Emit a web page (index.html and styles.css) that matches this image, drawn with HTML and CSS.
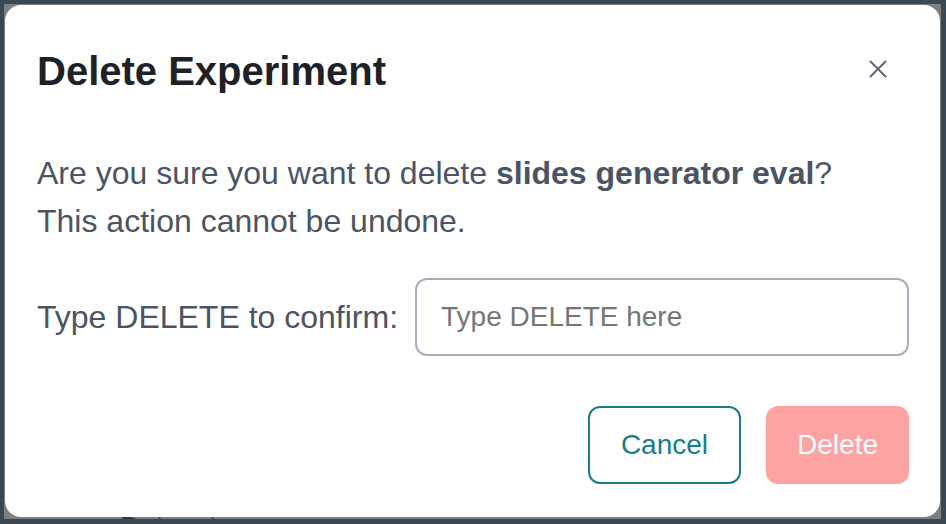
FILE: index.html
```html
<!DOCTYPE html>
<html lang="en">
<head>
<meta charset="utf-8">
<title>Delete Experiment</title>
<link rel="stylesheet" href="styles.css">
</head>
<body>
<div class="screen">
  <div class="behind">Dataset</div>
  <div class="modal" role="dialog" aria-labelledby="dlg-title">
    <div class="modal-header">
      <h2 class="modal-title" id="dlg-title">Delete Experiment</h2>
      <button class="close-btn" aria-label="Close">
        <svg width="18" height="18" viewBox="0 0 18 18" aria-hidden="true">
          <path d="M1.5 1.5 L16.5 16.5 M16.5 1.5 L1.5 16.5" stroke="#5f6872" stroke-width="2" stroke-linecap="round" fill="none"/>
        </svg>
      </button>
    </div>
    <p class="modal-text">Are you sure you want to delete <strong>slides generator eval</strong>?<br>This action cannot be undone.</p>
    <div class="confirm-row">
      <label class="confirm-label" for="confirm">Type DELETE to confirm:</label>
      <input class="confirm-input" id="confirm" type="text" placeholder="Type DELETE here">
    </div>
    <div class="actions">
      <button class="btn btn-cancel">Cancel</button>
      <button class="btn btn-delete" disabled>Delete</button>
    </div>
  </div>
</div>
</body>
</html>
```

FILE: styles.css
```css
* { box-sizing: border-box; }

html, body {
  margin: 0;
  height: 100%;
}

body {
  background: #394852;
  padding: 4px 5px 5px 4px;
  font-family: "Liberation Sans", Arial, sans-serif;
  overflow: hidden;
}

.screen {
  position: relative;
  height: 515px;
  background: #7f7f7f;
  overflow: hidden;
  padding: 1px 1px 0 1px;
}

.behind {
  position: absolute;
  left: 116px;
  top: 507px;
  font-size: 28px;
  line-height: 32px;
  color: #35393e;
}

.modal {
  position: relative;
  background: #ffffff;
  border-radius: 16px;
  padding: 38px 31px 33px 32px;
}

.modal-header {
  display: flex;
  align-items: center;
  justify-content: space-between;
  height: 56px;
}

.modal-title {
  margin: 0;
  font-size: 40px;
  line-height: 56px;
  font-weight: 700;
  color: #1e2226;
}

.close-btn {
  width: 40px;
  height: 40px;
  margin: 0 11px 4px 0;
  padding: 0;
  border: 0;
  background: transparent;
  display: flex;
  align-items: center;
  justify-content: center;
  cursor: pointer;
}

.modal-text {
  margin: 50px 0 0 0;
  font-size: 32px;
  line-height: 48px;
  color: #4a5462;
}

.modal-text strong {
  font-weight: 700;
  color: #4a5462;
}

.confirm-row {
  display: flex;
  align-items: center;
  gap: 17px;
  margin-top: 33px;
}

.confirm-label {
  font-size: 32px;
  line-height: 48px;
  color: #4a5462;
  white-space: nowrap;
}

.confirm-input {
  flex: 1;
  min-width: 0;
  height: 78px;
  border: 2px solid #a9adbb;
  border-radius: 12px;
  padding: 0 24px;
  font-family: "Liberation Sans", Arial, sans-serif;
  font-size: 28px;
  color: #333;
  outline: none;
  background: #fff;
}

.confirm-input::placeholder {
  color: #767676;
}

.actions {
  display: flex;
  justify-content: flex-end;
  gap: 25px;
  margin-top: 50px;
}

.btn {
  height: 78px;
  border-radius: 12px;
  font-family: "Liberation Sans", Arial, sans-serif;
  font-size: 28px;
  line-height: 1;
  cursor: pointer;
}

.btn-cancel {
  padding: 0 31px;
  background: #ffffff;
  border: 2px solid #177e85;
  color: #177e85;
}

.btn-delete {
  padding: 0 31px;
  background: #fea3a3;
  border: 0;
  color: #ffffff;
}
```
